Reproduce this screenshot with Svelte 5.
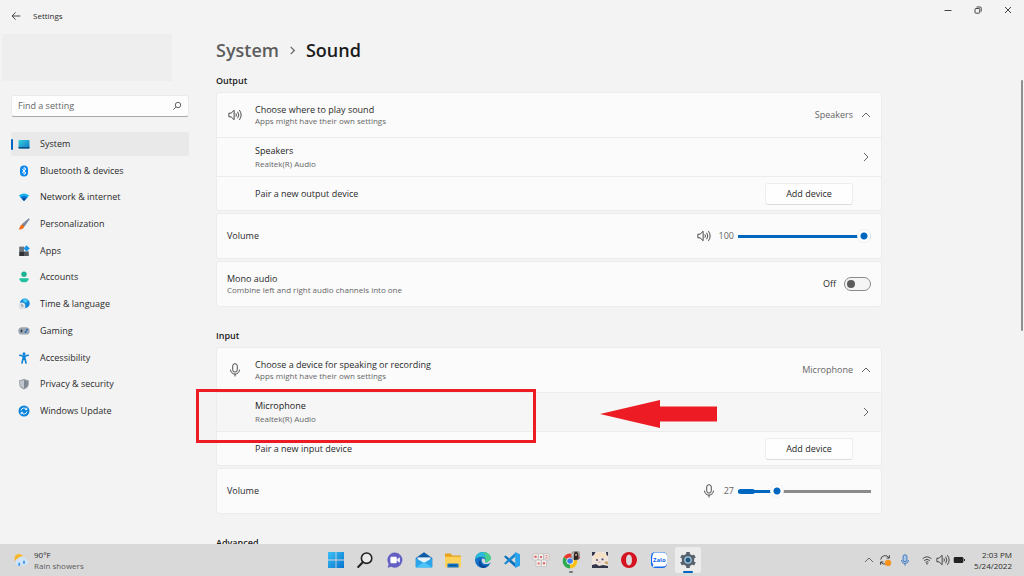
<script lang="ts">
	interface NavItem {
		id: string;
		label: string;
	}

	const navItems: NavItem[] = [
		{ id: 'system', label: 'System' },
		{ id: 'bluetooth', label: 'Bluetooth & devices' },
		{ id: 'network', label: 'Network & internet' },
		{ id: 'personalization', label: 'Personalization' },
		{ id: 'apps', label: 'Apps' },
		{ id: 'accounts', label: 'Accounts' },
		{ id: 'time', label: 'Time & language' },
		{ id: 'gaming', label: 'Gaming' },
		{ id: 'accessibility', label: 'Accessibility' },
		{ id: 'privacy', label: 'Privacy & security' },
		{ id: 'update', label: 'Windows Update' }
	];

	const taskbarApps = [
		'Start', 'Search', 'Chat', 'Mail', 'Explorer', 'Edge', 'Code',
		'Mahjong', 'Chrome', 'Game', 'Opera', 'Zalo', 'Settings'
	];

	let current = $state('system');
	let outputVolume = $state(100);
	let inputVolume = $state(27);
	let mono = $state(false);
	let outputOpen = $state(true);
	let inputOpen = $state(true);
</script>

{#snippet speaker()}
	<svg class="icon line" viewBox="0 0 16 16" aria-hidden="true">
		<path d="M1 5.900h2.500L7 2.600v10.800L3.500 10.100H1z" />
		<path d="M9 6.100q1.300 1.900 0 3.800M11 4.300q2.700 3.700 0 7.400M13 2.400q4 5.600 0 11.200" />
	</svg>
{/snippet}

{#snippet mic()}
	<svg class="icon line" viewBox="0 0 16 16" aria-hidden="true">
		<rect x="5.400" y="0.800" width="5.200" height="9.600" rx="2.600" />
		<path d="M2.900 7.600a5.100 5.100 0 0 0 10.200 0M8 12.700v2.700" />
	</svg>
{/snippet}

{#snippet chevron(dir: string)}
	<svg class="chevron {dir}" viewBox="0 0 10 10" aria-hidden="true">
		<path d="M3 1l4 4-4 4" />
	</svg>
{/snippet}

{#snippet navIcon(id: string)}
	<svg class="nav-icon" viewBox="0 0 12 12" aria-hidden="true">
		{#if id === 'system'}
			<rect x="0.5" y="2" width="11" height="8.4" rx="0.7" fill="url(#screen)" />
			<path d="M0.5 9h11v0.8q0 0.7-0.7 0.7H1.2q-0.7 0-0.7-0.7z" fill="#0c4f86" />
		{:else if id === 'bluetooth'}
			<rect x="2" y="0.5" width="8" height="11" rx="4" fill="#0a84f0" />
			<path d="M3.9 4.1l4.1 3.8L6 9.6V2.4l2 1.7-4.1 3.8" fill="none" stroke="#fff" stroke-width="0.9" />
		{:else if id === 'network'}
			<path d="M0.8 4.6Q6 0.4 11.2 4.6L6 10z" fill="#19b5ee" />
			<path d="M2.4 6.2Q6 3.2 9.6 6.2L6 10z" fill="#0b72ce" />
			<path d="M4 7.8Q6 6.2 8 7.8L6 10z" fill="#07449a" />
		{:else if id === 'personalization'}
			<path d="M11.2 0.8L4.6 6.2l1.7 1.7z" fill="#7d8ca0" stroke="#7d8ca0" stroke-width="1.2" />
			<path d="M4.6 6.2l1.7 1.7-1 1z" fill="#44546c" />
			<path d="M4.3 6.4l1.8 1.8C6 10.8 3 11.8 0.6 11.3 2.3 9.7 1.6 7 4.3 6.4z" fill="#f0701b" />
		{:else if id === 'apps'}
			<rect x="1.2" y="1.6" width="4.8" height="4.8" fill="#70757c" />
			<rect x="1.2" y="6.4" width="4.8" height="4.6" fill="#2f3338" />
			<rect x="6" y="6.4" width="4.8" height="4.6" fill="#555a61" />
			<path d="M8.6 0.2L11.8 3.4 8.6 6.6 5.400 3.4z" fill="#1b95e8" />
		{:else if id === 'accounts'}
			<circle cx="6" cy="3.2" r="2.7" fill="#1cb394" />
			<path d="M1.5 7.2h9v1Q10 11.3 6 11.3T1.5 8.2z" fill="#22c2a1" />
		{:else if id === 'time'}
			<circle cx="6.8" cy="5.4" r="4.9" fill="#1287d8" />
			<path d="M5 1q3-1 5 1.6L8 5 5.6 4z" fill="#45c8f2" />
			<circle cx="3.9" cy="8" r="3.5" fill="#dfe3e7" />
			<path d="M3.8 6v2.2h1.6" fill="none" stroke="#68717b" stroke-width="0.7" />
		{:else if id === 'gaming'}
			<rect x="0.3" y="2.2" width="11.4" height="7.4" rx="3.7" fill="#9ca6b1" />
			<path d="M2 5.9h3M3.5 4.4v3" stroke="#35404c" stroke-width="0.9" />
			<circle cx="8.9" cy="4.8" r="1" fill="#1667bd" />
			<circle cx="7.7" cy="7" r="1" fill="#1667bd" />
		{:else if id === 'accessibility'}
			<circle cx="6" cy="1.7" r="1.5" fill="#0c83d9" />
			<path d="M1.8 3.3L6 4.2l4.2-0.9M6 4v3M4 11L5 7h2l1 4" fill="none" stroke="#0c83d9" stroke-width="1.6" stroke-linecap="round" />
			<path d="M4.4 4h3.2v3.8H4.4z" fill="#0c83d9" />
		{:else if id === 'privacy'}
			<path d="M6 0.8q2.2 1.4 4.8 1.4V6q0 3.6-4.8 5.4Q1.2 9.6 1.2 6V2.2Q3.8 2.2 6 0.8z" fill="#9aa1aa" />
			<path d="M6 2v8.2Q2.3 8.7 2.2 6V3.2Q4.2 3.1 6 2z" fill="#c2c7cd" />
			<path d="M6 2v8.2Q9.7 8.7 9.8 6V3.2Q7.8 3.1 6 2z" fill="#7f8791" />
		{:else}
			<circle cx="6" cy="6" r="5.5" fill="#0b84dc" />
			<path d="M3 5.4a3.1 3.1 0 0 1 5.6-1M9 6.6a3.1 3.1 0 0 1-5.6 1M8.8 2.6v2H6.9M3.2 9.4v-2h1.9" fill="none" stroke="#fff" stroke-width="0.9" />
		{/if}
	</svg>
{/snippet}

{#snippet appIcon(name: string)}
	<svg class="app-icon" viewBox="0 0 18 18" aria-hidden="true">
		{#if name === 'Start'}
			<path d="M1 1h7.6v7.6H1zM9.4 1H17v7.6H9.4zM1 9.4h7.6V17H1zM9.4 9.4H17V17H9.4z" fill="url(#win)" />
		{:else if name === 'Search'}
			<circle cx="10.6" cy="7.2" r="5.2" fill="#e9e9e9" stroke="#222" stroke-width="1.6" />
			<path d="M6.8 11.2L2.2 16" stroke="#222" stroke-width="2" stroke-linecap="round" />
		{:else if name === 'Chat'}
			<path d="M9 1.4a7.6 7.6 0 1 1-3.6 14.4L1.6 16.8l1-3.8A7.6 7.6 0 0 1 9 1.4z" fill="#6561c4" />
			<rect x="4.4" y="5.8" width="6.4" height="6.4" rx="1.2" fill="#fff" />
			<path d="M11.2 8.2l2.6-1.9v5.400l-2.6-1.9z" fill="#fff" />
		{:else if name === 'Mail'}
			<path d="M0.8 7L9 1.2 17.2 7v9H0.8z" fill="#0f5ca6" />
			<path d="M2.4 6.4h13.2v6H2.4z" fill="#e8f4fc" />
			<path d="M0.8 7L9 12l8.2-5v9.4H0.8z" fill="#2aa5ea" />
			<path d="M0.8 16.4L9 11l8.2 5.4z" fill="#4cc3f6" />
		{:else if name === 'Explorer'}
			<path d="M1 2.4h5.6l1.8 2H16q1 0 1 1V9H1z" fill="#e6a21a" />
			<path d="M1 5.8h16v9.8q0 0.8-0.8 0.8H1.8Q1 16.4 1 15.6z" fill="#fdd25a" />
			<path d="M3.4 16.4v-3q0-1 1-1h9.2q1 0 1 1v3z" fill="#1477c9" />
			<path d="M5 14.4h8" stroke="#0c4f91" stroke-width="1" />
		{:else if name === 'Edge'}
			<circle cx="9" cy="9" r="8" fill="#1473c8" />
			<path d="M1.2 8C2 3.6 5.2 1 9.2 1c4.6 0 7.9 3.3 7.9 6.6 0 2.7-2.1 4.1-4.2 4.1-1.9 0-2.3-0.9-1.7-1.6C12.5 8.3 11 5.8 8 5.8 4.7 5.8 2.1 6.6 1.2 8z" fill="#48cf8b" />
			<path d="M1.2 8C2 3.6 5.2 1 9.2 1L12 5.6 8 5.8Q3.6 5.8 1.2 8z" fill="#2ab9dc" />
			<path d="M7 8.2c-1.5 3.6 1.7 7.3 6.3 6.3L15 13.6Q12.7 17 9 17 4.6 15.7 4.6 11.8 4.8 9.3 7 8.2z" fill="#0b4a9a" />
			<path d="M8.3 7.6q-1.5 2.7 0.7 4.6 2.6 1.700 6.6 0l1.700-1.4V8L13 11.700q-2.900-0.300-1.800-1.800 0.600-2-2.900-2.300z" fill="#d9d9d9" />
		{:else if name === 'Code'}
			<path d="M1 5.800L2.600 4.500l10 8v4z" fill="#0a6fb8" />
			<path d="M1 12.200l1.600 1.300 10-8V1.500z" fill="#1b88d1" />
			<path d="M12.200 1l4.800 2.200v11.600L12.200 17z" fill="#28a4ee" />
		{:else if name === 'Mahjong'}
			<g fill="#f4f0ef" stroke="#b7b1b0" stroke-width="0.6">
				<rect x="1" y="2.6" width="5" height="6.4" rx="0.8" />
				<rect x="6.5" y="2.6" width="5" height="6.4" rx="0.8" />
				<rect x="12" y="2.6" width="5" height="6.4" rx="0.8" />
				<rect x="4" y="9" width="5" height="6.6" rx="0.8" />
				<rect x="9.5" y="9" width="5" height="6.6" rx="0.8" />
			</g>
			<g fill="#d96a6a">
				<circle cx="3.5" cy="5.8" r="1.3" />
				<path d="M8 5h2v2H8zM13.5 4.2h2v1h-2zM13.5 6.4h2v1h-2zM5.6 11.5h2v2h-2z" />
				<circle cx="12" cy="12.3" r="1.2" />
			</g>
		{:else if name === 'Chrome'}
			<circle cx="8" cy="10" r="7.4" fill="#fff" />
			<path d="M8 10L1.6 6.3A7.4 7.4 0 0 1 14.4 6.3z" fill="#e33b2e" />
			<path d="M8 10l6.4-3.7A7.4 7.4 0 0 1 8 17.4z" fill="#fbc116" />
			<path d="M8 10v7.4A7.4 7.4 0 0 1 1.6 6.3z" fill="#2da94f" />
			<circle cx="8" cy="10" r="3.6" fill="#fff" />
			<circle cx="8" cy="10" r="2.8" fill="#3b7ded" />
			<circle cx="14" cy="4.4" r="5" fill="#a3a09c" />
			<path d="M12 9Q11 1 14 0.600q3 0.400 2.400 8z" fill="#2b2425" />
			<path d="M13.300 2.800h1.500v2.200h-1.500z" fill="#d6a790" />
			<path d="M9.800 3.600l1.600-1.600v6z" fill="#d8d5d0" />
			<path d="M16.600 5.200v2.700l1.600-1.500z" fill="#b9474a" />
		{:else if name === 'Game'}
			<path d="M1 1h16v16H1z" fill="#efe4dc" />
			<path d="M1 1h3.5L3 4 1 5zM17 1h-2l0.500 3 1.500 1zM1 17v-3l4-1 3 2 4-1 5 1v2z" fill="#34364a" />
			<path d="M3 6q1-4 6-4t6 4l-2 2-2-3-4 1-2 4z" fill="#f6e0c0" />
			<path d="M5 8.200h2v1.6H5zM10.500 7.600h2v1.600h-2z" fill="#4b4d76" />
			<path d="M13 12l2.500-2 1.500 1.500v2z" fill="#c9a268" />
			<path d="M7.500 11.200h2" stroke="#b5706b" stroke-width="0.7" />
		{:else if name === 'Opera'}
			<path fill-rule="evenodd" d="M9 1a8 8 0 1 1 0 16A8 8 0 0 1 9 1zm0 2.600C7.200 3.600 6 5.800 6 9s1.200 5.400 3 5.400S12 12.200 12 9 10.800 3.600 9 3.600z" fill="#d5121f" />
		{:else if name === 'Zalo'}
			<rect x="1" y="1" width="16" height="16" rx="4.5" fill="#1269ec" />
			<path d="M4.5 1.600H13Q17 2 17 6v5q0 4.500-4.500 4.500H6L2.600 16l0.800-2.200Q2 12.200 2 9.500 2 3 4.500 1.600z" fill="#fff" />
			<text x="9.300" y="11" text-anchor="middle">Zalo</text>
		{:else}
			<g stroke="#56616c" stroke-width="3.6">
				<path d="M9 1v16M2.100 5l13.800 8M2.100 13l13.800-8" />
			</g>
			<circle cx="9" cy="9" r="6.2" fill="#56616c" />
			<circle cx="9" cy="9" r="3.8" fill="#a9c9e2" />
			<circle cx="9" cy="9" r="2.5" fill="#26587f" />
		{/if}
	</svg>
{/snippet}

<svg class="defs" aria-hidden="true">
	<defs>
		<linearGradient id="screen" x1="0" y1="0" x2="1" y2="1">
			<stop offset="0" stop-color="#35d0dc" />
			<stop offset="1" stop-color="#0f78c4" />
		</linearGradient>
		<linearGradient id="win" x1="0" y1="0" x2="1" y2="1">
			<stop offset="0" stop-color="#3cc0f5" />
			<stop offset="1" stop-color="#0873cf" />
		</linearGradient>
	</defs>
</svg>

<div class="desktop">
	<header class="titlebar">
		<button class="back" type="button" aria-label="Back">
			<svg viewBox="0 0 10 10" aria-hidden="true"><path d="M9.3 5H1M4.6 1.4L1 5l3.600 3.600" /></svg>
		</button>
		<span class="app-name">Settings</span>
		<div class="window-controls">
			<button type="button" aria-label="Minimize">
				<svg viewBox="0 0 10 10" aria-hidden="true"><path d="M1.500 5.500h7" /></svg>
			</button>
			<button type="button" aria-label="Restore">
				<svg viewBox="0 0 10 10" aria-hidden="true">
					<rect x="2" y="3.500" width="4.700" height="4.700" rx="0.8" />
					<path d="M3.500 2h3.700q1 0 1 1v3.700" />
				</svg>
			</button>
			<button type="button" aria-label="Close">
				<svg viewBox="0 0 10 10" aria-hidden="true"><path d="M2 2l6 6M8 2L2 8" /></svg>
			</button>
		</div>
	</header>

	<div class="body">
		<aside class="sidebar">
			<div class="profile"></div>
			<div class="search">
				<input type="search" placeholder="Find a setting" aria-label="Find a setting" />
				<svg viewBox="0 0 10 10" aria-hidden="true">
					<circle cx="6" cy="4" r="2.700" />
					<path d="M4 6L1.400 8.600" />
				</svg>
			</div>
			<nav>
				{#each navItems as item (item.id)}
					<button
						type="button"
						class="nav-item"
						class:active={current === item.id}
						onclick={() => (current = item.id)}
					>
						{@render navIcon(item.id)}
						{item.label}
					</button>
				{/each}
			</nav>
		</aside>

		<main>
			<h1><a href="#system">System</a> {@render chevron('crumb')} <span>Sound</span></h1>

			<h2>Output</h2>
			<section class="card">
				<button class="row head" type="button" aria-expanded={outputOpen} onclick={() => (outputOpen = !outputOpen)}>
					{@render speaker()}
					<span class="text">
						<span class="title">Choose where to play sound</span>
						<span class="sub">Apps might have their own settings</span>
					</span>
					<span class="value">Speakers</span>
					{@render chevron('up')}
				</button>
				{#if outputOpen}
					<button class="row device" type="button">
						<span class="text">
							<span class="title">Speakers</span>
							<span class="sub">Realtek(R) Audio</span>
						</span>
						{@render chevron('right')}
					</button>
					<div class="row pair">
						<span class="text">Pair a new output device</span>
						<button class="add" type="button">Add device</button>
					</div>
				{/if}
			</section>

			<section class="card row single">
				<label class="text" for="output-volume">Volume</label>
				{@render speaker()}
				<output for="output-volume">{outputVolume}</output>
				<div class="slider">
					<input id="output-volume" type="range" min="0" max="100" bind:value={outputVolume} style:--fill="{outputVolume}%" />
				</div>
			</section>

			<section class="card row single">
				<label class="text" for="mono">
					<span class="title">Mono audio</span>
					<span class="sub">Combine left and right audio channels into one</span>
				</label>
				<span class="state">{mono ? 'On' : 'Off'}</span>
				<input id="mono" class="switch" type="checkbox" role="switch" bind:checked={mono} />
			</section>

			<h2 class="next">Input</h2>
			<section class="card">
				<button class="row head" type="button" aria-expanded={inputOpen} onclick={() => (inputOpen = !inputOpen)}>
					{@render mic()}
					<span class="text">
						<span class="title">Choose a device for speaking or recording</span>
						<span class="sub">Apps might have their own settings</span>
					</span>
					<span class="value">Microphone</span>
					{@render chevron('up')}
				</button>
				{#if inputOpen}
					<button class="row device hovered" type="button">
						<span class="text">
							<span class="title">Microphone</span>
							<span class="sub">Realtek(R) Audio</span>
						</span>
						{@render chevron('right')}
						<span class="callout"></span>
						<svg class="arrow" viewBox="0 0 117 30" aria-hidden="true">
							<path d="M0 15L60 1v6.500h57v15H60V29z" />
						</svg>
					</button>
					<div class="row pair">
						<span class="text">Pair a new input device</span>
						<button class="add" type="button">Add device</button>
					</div>
				{/if}
			</section>

			<section class="card row single">
				<label class="text" for="input-volume">Volume</label>
				{@render mic()}
				<output for="input-volume">{inputVolume}</output>
				<div class="slider">
					<input id="input-volume" type="range" min="0" max="100" bind:value={inputVolume} style:--fill="{inputVolume}%" />
					<span class="level"></span>
				</div>
			</section>

			<h2 class="next">Advanced</h2>
		</main>
		<div class="scrollbar"></div>
	</div>

	<footer class="taskbar">
		<button class="weather" type="button">
			<svg viewBox="0 0 16 16" aria-hidden="true">
				<circle cx="6" cy="6.500" r="4.500" fill="#f9b52c" />
				<path d="M5.400 13.600a3.800 3.800 0 0 1 0-7.400 4.300 4.300 0 0 1 7.400 0.600A3.500 3.500 0 0 1 12.400 13.600z" fill="#cfe4f7" />
				<path d="M6.200 10q2.200 3.200 0 4-2.200-0.800 0-4zM11 8q2.200 3.200 0 4-2.200-0.800 0-4z" fill="#3d97ea" />
			</svg>
			<span>90°F<br /><span class="muted">Rain showers</span></span>
		</button>
		<div class="apps">
			{#each taskbarApps as name}
				<button
					type="button"
					class="app"
					class:running={name === 'Chrome'}
					class:focused={name === 'Settings'}
					aria-label={name}
				>
					{@render appIcon(name)}
				</button>
			{/each}
		</div>
		<div class="tray">
			{@render chevron('up')}
			<svg class="icon line" viewBox="0 0 16 16" aria-hidden="true">
				<path d="M3 7.500a5.200 5.200 0 0 1 9.600-2M13 2.500v3.300H9.800M12.800 8.500a5.200 5.200 0 0 1-9.400 2M3 13.500v-3.300h3.200" />
				<circle cx="11.500" cy="11.300" r="3.600" fill="#f7931e" stroke="none" />
			</svg>
			<svg class="icon line mic-active" viewBox="0 0 16 16" aria-hidden="true">
				<rect x="5.800" y="2" width="4.400" height="8" rx="2.200" />
				<path d="M4 8a4 4 0 0 0 8 0M8 12v2.500" fill="none" />
			</svg>
			<div class="status">
				<svg class="icon line" viewBox="0 0 16 16" aria-hidden="true">
					<path d="M3 6.500q5-4.200 10 0M4.700 8.600q3.300-2.700 6.600 0M6.300 10.600q1.700-1.300 3.400 0" />
					<circle cx="8" cy="12.200" r="0.900" fill="#333" stroke="none" />
				</svg>
				{@render speaker()}
				<svg class="icon" viewBox="0 0 16 16" aria-hidden="true">
					<rect x="2" y="4.500" width="11" height="7" rx="1.600" fill="#222" />
					<path d="M13.700 6.800h1.100v2.400h-1.100z" fill="#222" />
				</svg>
			</div>
			<button class="clock" type="button">2:03 PM<br />5/24/2022</button>
		</div>
	</footer>
</div>

<style>
	:global(body) {
		margin: 0;
		background: #f3f3f3;
	}

	.desktop {
		display: flex;
		flex-direction: column;
		height: 100vh;
		overflow: hidden;
		background: #f3f3f3;
		color: #2a2a2a;
		font: 9px/12px 'Open Sans', 'Noto Sans', sans-serif;
	}

	.desktop * {
		box-sizing: border-box;
	}

	.defs {
		position: absolute;
		width: 0;
		height: 0;
	}

	button {
		margin: 0;
		padding: 0;
		border: 0;
		background: none;
		color: inherit;
		font: inherit;
		text-align: left;
	}

	svg {
		flex: none;
	}

	.titlebar {
		display: flex;
		align-items: center;
		flex: none;
		height: 32px;
		padding-left: 11px;
	}

	.titlebar svg {
		display: block;
		width: 10px;
		height: 10px;
		fill: none;
		stroke: #444;
	}

	.app-name {
		margin-left: 12px;
		font-size: 8px;
	}

	.window-controls {
		display: flex;
		align-self: flex-start;
		margin-left: auto;
		padding-right: 1px;
	}

	.window-controls button {
		display: grid;
		place-items: center;
		width: 30px;
		height: 20px;
	}

	.body {
		display: flex;
		flex: 1;
		min-height: 0;
	}

	.sidebar {
		display: flex;
		flex-direction: column;
		flex: none;
		width: 200px;
		padding: 2px 11px 0;
	}

	.profile {
		flex: none;
		width: 170px;
		height: 47px;
		margin-left: -9px;
		background: #eee;
	}

	.search {
		display: flex;
		align-items: center;
		flex: none;
		height: 22px;
		margin-top: 14px;
		padding: 0 6px;
		border: 1px solid #ebebeb;
		border-bottom-color: #a8a8a8;
		border-radius: 3px;
		background: #fdfdfd;
	}

	.search input {
		flex: 1;
		min-width: 0;
		padding: 0;
		border: 0;
		outline: 0;
		background: none;
		color: inherit;
		font: inherit;
	}

	.search input::placeholder {
		color: #666;
	}

	.search svg {
		width: 10px;
		height: 10px;
		fill: none;
		stroke: #666;
	}

	nav {
		display: flex;
		flex-direction: column;
		justify-content: space-between;
		flex: none;
		height: 291px;
		margin-top: 15px;
	}

	.nav-item {
		display: flex;
		align-items: center;
		gap: 10px;
		height: 24px;
		padding-left: 7px;
		border-radius: 3px;
	}

	.nav-item.active {
		position: relative;
		background: #e9e9e9;
	}

	.nav-item.active::before {
		content: '';
		position: absolute;
		left: 0;
		width: 2px;
		height: 11px;
		border-radius: 1px;
		background: #0067c0;
	}

	.nav-icon {
		width: 12px;
		height: 12px;
	}

	main {
		flex: 1;
		min-width: 0;
		max-width: 682px;
		padding-left: 16px;
	}

	h1 {
		display: flex;
		align-items: center;
		gap: 9px;
		margin: 6px 0 0;
		color: #1b1b1b;
		font-size: 18px;
		font-weight: 600;
		line-height: 24px;
	}

	h1 a {
		color: #5d5d5d;
		text-decoration: none;
	}

	h2 {
		margin: 13px 0 5px;
		color: #1b1b1b;
		font-size: 9px;
		font-weight: 600;
		line-height: 12px;
	}

	h2.next {
		margin-top: 23px;
	}

	.card {
		border: 1px solid #ececec;
		border-radius: 3px;
		background: #fbfbfb;
	}

	.card + .card {
		margin-top: 2px;
	}

	.row {
		display: flex;
		align-items: center;
		width: 100%;
		padding: 0 10px;
	}

	.text {
		flex: 1;
		min-width: 0;
	}

	.title,
	.sub {
		display: block;
	}

	.sub {
		color: #666;
		font-size: 8px;
		line-height: 10px;
	}

	.icon {
		width: 14px;
		height: 14px;
	}

	.line {
		fill: none;
		stroke: #333;
	}

	.head {
		height: 44px;
		gap: 13px;
		padding-left: 11px;
	}

	.head .value {
		color: #666;
	}

	.head .chevron {
		margin-left: -5px;
	}

	.device {
		position: relative;
		height: 39px;
		padding-left: 38px;
		border-top: 1px solid #ececec;
	}

	.device .title {
		color: #1b1b1b;
		line-height: 14px;
	}

	.device .sub {
		line-height: 12px;
	}

	.hovered {
		background: #f6f6f6;
	}

	.pair {
		height: 34px;
		padding-left: 38px;
		padding-right: 28px;
		border-top: 1px solid #ececec;
	}

	.add {
		width: 88px;
		height: 22px;
		border: 1px solid #eee;
		border-bottom-color: #dcdcdc;
		border-radius: 3px;
		background: #fefefe;
		text-align: center;
	}

	.single {
		height: 46px;
	}

	.chevron {
		width: 10px;
		height: 10px;
		fill: none;
		stroke: #666;
	}

	.chevron.up {
		transform: rotate(-90deg);
	}

	.chevron.crumb {
		width: 9px;
		height: 9px;
		stroke-width: 1.4;
	}

	output {
		margin: 0 4px 0 8px;
		color: #666;
	}

	.slider {
		position: relative;
		width: 133px;
		height: 16px;
	}

	.slider input {
		display: block;
		width: 100%;
		height: 16px;
		margin: 0;
		appearance: none;
		background: linear-gradient(to right, #0067c0 var(--fill), #8a8a8a var(--fill)) center / 100% 3px no-repeat;
	}

	.slider input::-webkit-slider-thumb {
		width: 14px;
		height: 14px;
		appearance: none;
		border: 1px solid #f0f0f0;
		border-radius: 50%;
		background: radial-gradient(circle, #0067c0 3px, #fff 4px);
	}

	.level {
		position: absolute;
		top: 6px;
		left: 0;
		width: 17px;
		height: 5px;
		border-radius: 3px;
		background: #0067c0;
	}

	.state {
		margin-right: 8px;
	}

	.switch {
		display: flex;
		align-items: center;
		width: 27px;
		height: 14px;
		margin: 0;
		padding: 0 2px;
		appearance: none;
		border: 1px solid #8a8a8a;
		border-radius: 7px;
		background: #f5f5f5;
	}

	.switch::before {
		content: '';
		width: 8px;
		height: 8px;
		border-radius: 50%;
		background: #5c5c5c;
	}

	.switch:checked {
		justify-content: flex-end;
		border-color: #0067c0;
		background: #0067c0;
	}

	.switch:checked::before {
		background: #fff;
	}

	/* markup drawn over the microphone row */
	.callout {
		position: absolute;
		z-index: 1;
		top: -4px;
		left: -21px;
		width: 340px;
		height: 54px;
		border: 3px solid #ed1c24;
	}

	.arrow {
		position: absolute;
		top: 6px;
		left: 383px;
		width: 117px;
		height: 30px;
		fill: #ed1c24;
	}

	.scrollbar {
		flex: none;
		width: 2px;
		height: 251px;
		margin: 48px 1px 0 auto;
		border-radius: 1px;
		background: #8f8f8f;
	}

	.taskbar {
		display: grid;
		grid-template-columns: 1fr auto 1fr;
		align-items: center;
		flex: none;
		height: 32px;
		background: #d9d9d9;
		font-size: 8px;
		line-height: 11px;
	}

	.weather {
		display: flex;
		align-items: center;
		gap: 5px;
		padding-left: 13px;
	}

	.weather svg {
		width: 16px;
		height: 16px;
	}

	.muted {
		color: #5c5c5c;
	}

	.apps {
		display: flex;
		justify-content: space-between;
		width: 378px;
	}

	.app {
		position: relative;
		display: grid;
		place-items: center;
		width: 26px;
		height: 26px;
		border-radius: 3px;
	}

	.app.focused {
		background: #ececec;
	}

	.app.running::after,
	.app.focused::after {
		content: '';
		position: absolute;
		bottom: 0;
		left: 11px;
		width: 4px;
		height: 2px;
		border-radius: 1px;
		background: #777;
	}

	.app.focused::after {
		left: 8px;
		width: 10px;
		background: #0067c0;
	}

	.app-icon {
		width: 18px;
		height: 18px;
	}

	.app-icon text {
		fill: #1269ec;
		font-size: 6px;
		font-weight: 700;
	}

	.tray {
		display: flex;
		align-items: center;
		justify-content: flex-end;
		gap: 4px;
		padding-right: 12px;
	}

	.tray .mic-active {
		margin-left: 2px;
		stroke: #2b6cb8;
		fill: #a9c8ea;
	}

	.status {
		display: flex;
		gap: 2px;
		margin: 0 4px;
	}

	.status .icon {
		stroke-width: 1;
	}

	.clock {
		text-align: right;
	}
</style>
